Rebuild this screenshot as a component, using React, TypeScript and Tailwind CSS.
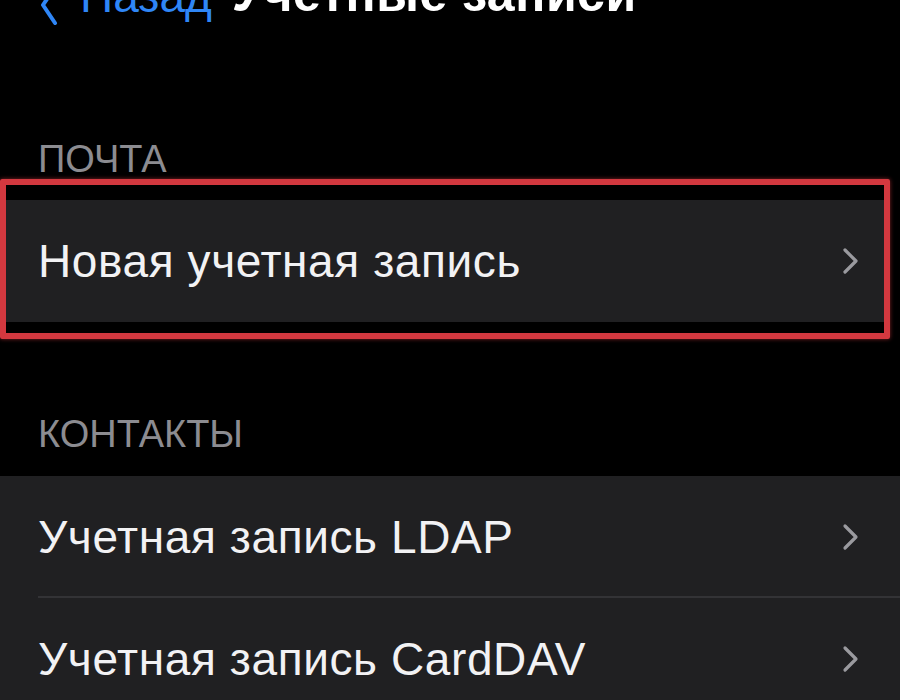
import React from 'react';

type CellProps = {
  label: string;
  divider?: boolean;
  inset?: 'plain' | 'framed';
};

function Chevron() {
  return (
    <svg width="18" height="28" viewBox="0 0 18 28" fill="none" className="shrink-0">
      <path d="M3 3 L14 14 L3 25" stroke="#9a9a9f" strokeWidth="3.2" strokeLinecap="round" strokeLinejoin="round" />
    </svg>
  );
}

function Cell({ label, divider, inset = 'plain' }: CellProps) {
  return (
    <div
      className={
        inset === 'framed'
          ? 'relative flex h-[122px] items-center justify-between pl-[32px] pr-[24px]'
          : 'relative flex h-[122px] items-center justify-between pl-[38px] pr-[40px]'
      }
    >
      <span className="text-[46px] leading-none tracking-[0.6px] text-[#f2f2f4]">{label}</span>
      <Chevron />
      {divider && <div className="absolute bottom-0 left-[38px] right-0 h-[2px] bg-[#333336]" />}
    </div>
  );
}

function SectionHeader({ title, className }: { title: string; className: string }) {
  return <div className={`pl-[38px] text-[38px] leading-none text-[#8c8c91] ${className}`}>{title}</div>;
}

export default function App() {
  return (
    <div
      className="h-[700px] w-[900px] overflow-hidden bg-black"
      style={{ fontFamily: '"Liberation Sans", Roboto, sans-serif' }}
    >
      {/* Navigation bar, scrolled mostly out of view */}
      <div className="-mt-[27px] flex h-[46px] items-end pl-[40px]">
        <div className="flex items-end gap-[22px]">
          <svg width="18" height="40" viewBox="0 0 18 40" fill="none" className="mb-[-6px]">
            <path d="M15 2 L3 20 L15 38" stroke="#2f86f6" strokeWidth="4" strokeLinecap="round" strokeLinejoin="round" />
          </svg>
          <span className="text-[46px] leading-none text-[#2f86f6]">Назад</span>
        </div>
        <span className="ml-[20px] text-[50px] font-semibold leading-none tracking-[0.5px] text-white">
          Учетные записи
        </span>
      </div>

      {/* Mail */}
      <SectionHeader title="ПОЧТА" className="mt-[121px]" />
      <div className="mt-[1px] w-[890px] rounded-[2px] border-[6px] border-[#d2383f] pb-[11px] pt-[15px] shadow-[0_0_4px_rgba(210,56,63,0.6)]">
        <div className="bg-[#202022]">
          <Cell label="Новая учетная запись" inset="framed" />
        </div>
      </div>

      {/* Contacts */}
      <SectionHeader title="КОНТАКТЫ" className="mt-[76px]" />
      <div className="mt-[23px] bg-[#202022]">
        <Cell label="Учетная запись LDAP" divider />
        <Cell label="Учетная запись CardDAV" />
      </div>
    </div>
  );
}
